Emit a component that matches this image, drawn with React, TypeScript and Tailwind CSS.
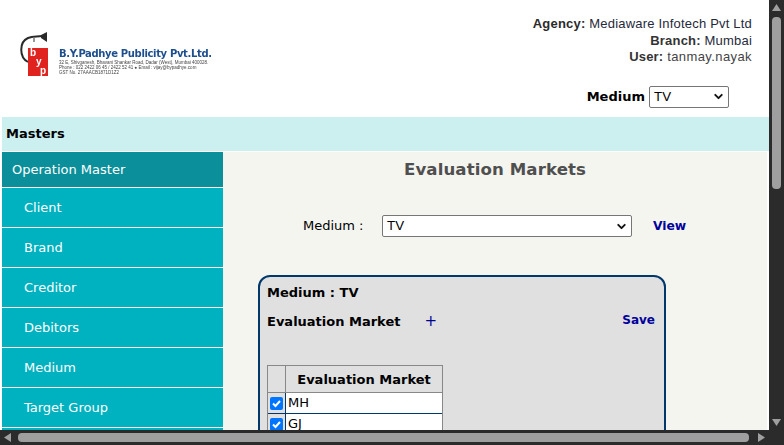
import { ChevronDown } from 'lucide-react'

const menu = ['Client', 'Brand', 'Creditor', 'Debitors', 'Medium', 'Target Group', '']

function Logo() {
  return (
    <div className="flex items-end gap-[6px] blur-[0.4px]">
      <div className="relative w-[34px] h-[46px]">
        <svg width="34" height="46" viewBox="0 0 34 46" className="absolute left-0 top-0">
          <path d="M9 31 C0 26 0 11 9 7 C14 5 18 6 23 5" fill="none" stroke="#2a2a2a" strokeWidth="2" />
          <path d="M22 4 L28 1 L28 11 L22 7 Z" fill="#2a2a2a" />
          <path d="M15 6 L15 11" stroke="#777" strokeWidth="1.500" />
        </svg>
        <div className="absolute left-[9px] top-[17px] w-[20px] h-[28px] bg-[#e0231f] text-white text-[10px] leading-[9px] font-bold [font-family:'Liberation_Sans',sans-serif] pl-[2px]">
          <div>b</div>
          <div className="pl-[6px]">y</div>
          <div className="pl-[10px]">p</div>
        </div>
      </div>
      <div className="pb-[2px] [font-family:'Liberation_Sans',sans-serif]">
        <div className="text-[10px] leading-[13px] font-bold text-[#1d4f8f] [font-family:'DejaVu_Sans',sans-serif] tracking-[-0.35px] whitespace-nowrap">
          B.Y.Padhye Publicity Pvt.Ltd.
        </div>
        <div className="text-[4.500px] leading-[5px] text-[#444] whitespace-nowrap">
          32 E, Shivganesh, Bhavani Shankar Road, Dadar (West), Mumbai 400028.
        </div>
        <div className="text-[4.500px] leading-[5px] text-[#444] whitespace-nowrap">
          Phone : 022 2422 06 45 / 2422 52 41 ● Email : vijay@bypadhye.com
        </div>
        <div className="text-[4.500px] leading-[5px] text-[#444] whitespace-nowrap">GST No. 27AAACB1871D1Z2</div>
      </div>
    </div>
  )
}

function Select({ className }: { className: string }) {
  return (
    <div className={`flex items-center justify-between bg-white border border-[#767676] rounded-[2px] pl-[4px] pr-[3px] text-[13.333px] text-black [font-family:'Liberation_Sans',sans-serif] ${className}`}>
      <span>TV</span>
      <ChevronDown size={13} strokeWidth={3.500} className="text-[#111]" />
    </div>
  )
}

function Row({ label }: { label: string }) {
  return (
    <div className="flex h-[21px] bg-white border-b border-[#00386b]">
      <div className="w-[18px] shrink-0 border-r border-[#00386b] bg-[#e0e0e0] flex items-center justify-center">
        <div className="w-[13px] h-[13px] rounded-[2px] bg-[#0075ff] flex items-center justify-center">
          <svg width="11" height="11" viewBox="0 0 11 11">
            <path d="M2 5.500 L4.500 8 L9 3" fill="none" stroke="white" strokeWidth="2" />
          </svg>
        </div>
      </div>
      <div className="pl-[2px] text-[13px] leading-[20px] text-black">{label}</div>
    </div>
  )
}

export default function App() {
  return (
    <div className="w-[784px] h-[445px] flex flex-col overflow-hidden bg-[#2b2b2b] [font-family:'DejaVu_Sans',Verdana,sans-serif]">
      <div className="flex flex-1 min-h-0">
        {/* page */}
        <div className="w-[769px] h-[430px] bg-white pl-[2px] overflow-hidden">
          <div className="h-[117px] flex justify-between">
            <div className="pl-[17px] pt-[31px]">
              <Logo />
            </div>
            <div className="pr-[17px] pt-[16px] flex flex-col items-end">
              <div className="text-right text-[13px] leading-[16.500px] text-[#333] [font-family:'Liberation_Sans',sans-serif] tracking-[0.2px]">
                <div className="text-[#2b2b2b]">
                  <span className="font-bold">Agency:</span> <span className="text-[#1f2a3a]">Mediaware Infotech Pvt Ltd</span>
                </div>
                <div>
                  <span className="font-bold">Branch:</span> <span className="text-[#1f2a3a]">Mumbai</span>
                </div>
                <div>
                  <span className="font-bold">User:</span> <span className="text-[#444] tracking-[0.4px]">tanmay.nayak</span>
                </div>
              </div>
              <div className="flex items-center gap-[4px] mt-[20px] mr-[23px]">
                <span className="text-[13px] font-bold text-black">Medium</span>
                <Select className="w-[80px] h-[22px]" />
              </div>
            </div>
          </div>

          <div className="h-[34px] bg-[#ccf0f0] pl-[4px] text-[13px] leading-[33px] font-bold text-black">Masters</div>

          <div className="flex mt-[1px] mr-[2px]">
            <div className="w-[221px] shrink-0 text-[13px] text-white">
              <div className="h-[36px] bg-[#0b8f9a] border-b border-white pl-[10px] leading-[36px]">Operation Master</div>
              {menu.map((m) => (
                <div key={m} className="h-[40px] bg-[#00b2bf] border-b border-white pl-[22px] leading-[40px]">
                  {m}
                </div>
              ))}
            </div>

            <div className="flex-1 h-[278px] bg-[#f5f5f0] overflow-hidden">
              <div className="text-center text-[16.600px] font-bold text-[#4f4f4f] pt-[6px] leading-[24px] tracking-[0.1px]">
                Evaluation Markets
              </div>
              <div className="flex items-center mt-[33px] pl-[80px]">
                <span className="w-[79px] text-[13px] text-black">Medium :</span>
                <Select className="w-[250px] h-[22px]" />
                <span className="ml-[21px] text-[12.300px] font-bold text-[#00009c]">View</span>
              </div>
              <div className="ml-[35px] mt-[38px] w-[408px] h-[200px] bg-[#e0e0e0] border-2 border-[#00386b] rounded-[12px] pl-[7px] pr-[9px] pt-[7px]">
                <div className="text-[13px] leading-[18px] font-bold text-black">Medium : TV</div>
                <div className="flex items-center justify-between mt-[10px] h-[20px]">
                  <div className="flex items-center">
                    <span className="text-[13px] font-bold text-black">Evaluation Market</span>
                    <span className="ml-[24px] text-[15px] leading-[17px] text-[#000090] -mt-[2px]">+</span>
                  </div>
                  <span className="text-[12px] font-bold text-[#00009c] -mt-[5px]">Save</span>
                </div>
                <div className="w-[176px] mt-[33px] border-x border-t border-[#888]">
                  <div className="flex h-[27px] border-b border-[#888]">
                    <div className="w-[18px] shrink-0 border-r border-[#888]" />
                    <div className="flex-1 text-center text-[13px] leading-[28px] font-bold text-black">Evaluation Market</div>
                  </div>
                  <Row label="MH" />
                  <Row label="GJ" />
                </div>
              </div>
            </div>
          </div>
        </div>

        {/* vertical scrollbar */}
        <div className="w-[15px] flex flex-col items-center pt-[4px] pb-[4px]">
          <svg width="9" height="7" viewBox="0 0 9 7" className="shrink-0">
            <path d="M4.500 0 L9 7 L0 7 Z" fill="#9f9f9f" />
          </svg>
          <div className="w-[9px] h-[172px] mt-[6px] rounded-[4px] bg-[#9f9f9f]" />
          <svg width="9" height="7" viewBox="0 0 9 7" className="shrink-0 mt-auto">
            <path d="M0 0 L9 0 L4.500 7 Z" fill="#9f9f9f" />
          </svg>
        </div>
      </div>

      {/* horizontal scrollbar */}
      <div className="h-[15px] flex items-center pl-[4px] pr-[19px]">
        <svg width="7" height="9" viewBox="0 0 7 9" className="shrink-0">
          <path d="M7 0 L7 9 L0 4.500 Z" fill="#9f9f9f" />
        </svg>
        <div className="h-[9px] w-[731px] ml-[7px] rounded-[4px] bg-[#9f9f9f]" />
        <svg width="7" height="9" viewBox="0 0 7 9" className="shrink-0 ml-auto">
          <path d="M0 0 L7 4.500 L0 9 Z" fill="#9f9f9f" />
        </svg>
      </div>
    </div>
  )
}
